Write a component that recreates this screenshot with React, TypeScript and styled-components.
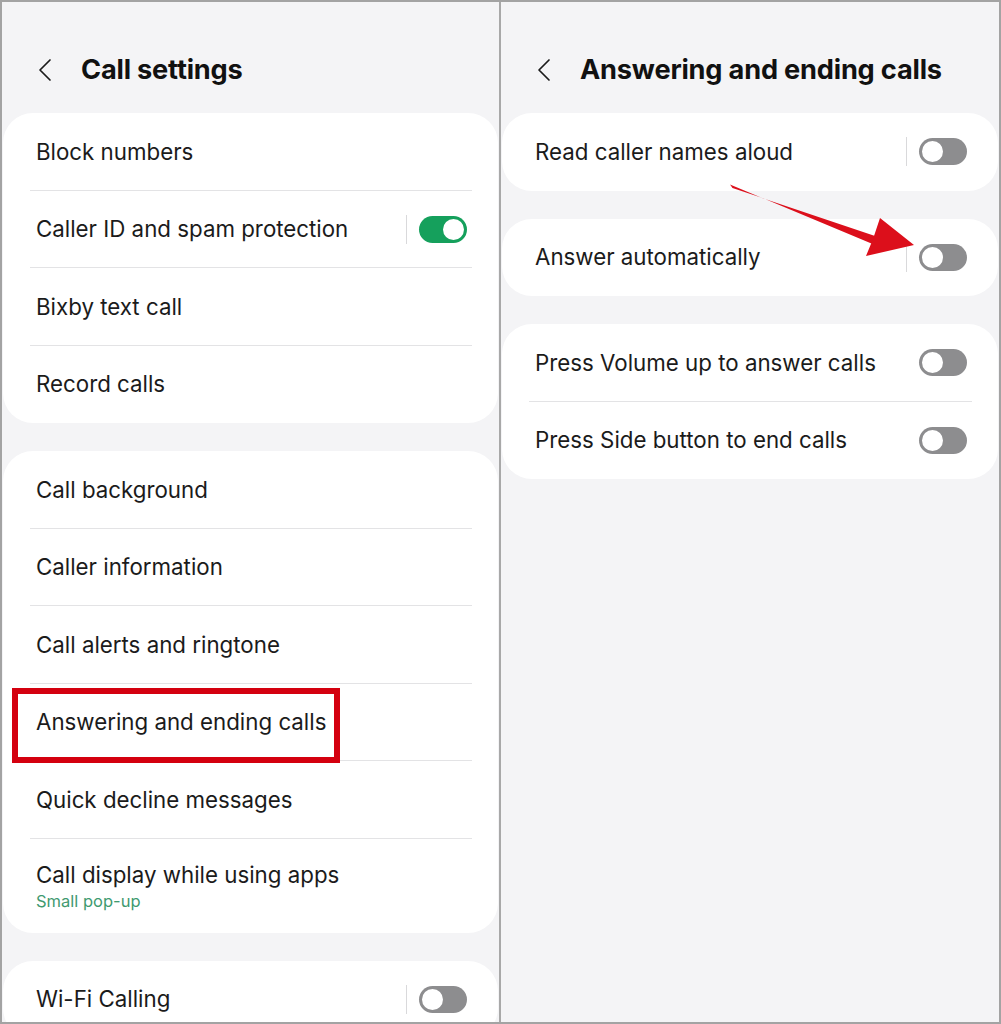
import styled, { createGlobalStyle } from "styled-components";

const GlobalStyle = createGlobalStyle`
  html, body {
    margin: 0;
    padding: 0;
    background: #ffffff;
  }
  body {
    font-family: Inter, "Noto Sans", Roboto, sans-serif;
    color: #1b1b1b;
  }
`;

interface Item {
  label: string;
  sub?: string;
  toggle?: "on" | "off";
  sep?: boolean;
}

const leftCards: Item[][] = [
  [
    { label: "Block numbers" },
    { label: "Caller ID and spam protection", toggle: "on", sep: true },
    { label: "Bixby text call" },
    { label: "Record calls" },
  ],
  [
    { label: "Call background" },
    { label: "Caller information" },
    { label: "Call alerts and ringtone" },
    { label: "Answering and ending calls" },
    { label: "Quick decline messages" },
    { label: "Call display while using apps", sub: "Small pop-up" },
  ],
  [{ label: "Wi-Fi Calling", toggle: "off", sep: true }],
];

const rightCards: Item[][] = [
  [{ label: "Read caller names aloud", toggle: "off", sep: true }],
  [{ label: "Answer automatically", toggle: "off", sep: true }],
  [
    { label: "Press Volume up to answer calls", toggle: "off" },
    { label: "Press Side button to end calls", toggle: "off" },
  ],
];

export default function App() {
  return (
    <>
      <GlobalStyle />
      <Frame>
        <Panel>
          <Header>
            <Back />
            <Title>Call settings</Title>
          </Header>
          <CardList>
            {leftCards.map((card, i) => (
              <SettingsCard key={i} items={card} />
            ))}
          </CardList>
        </Panel>
        <Divider />
        <Panel>
          <Header>
            <Back />
            <Title>Answering and ending calls</Title>
          </Header>
          <CardList>
            {rightCards.map((card, i) => (
              <SettingsCard key={i} items={card} />
            ))}
          </CardList>
        </Panel>

        {/* annotations drawn over the screenshot */}
        <Highlight />
        <Arrow viewBox="0 0 1001 1024">
          <polygon points="730,184.5 732.5,188 878,237 875,245" fill="#dc0f1b" />
          <polygon points="880,218 914,245 866,256 873,239" fill="#dc0f1b" />
        </Arrow>
      </Frame>
    </>
  );
}

function SettingsCard({ items }: { items: Item[] }) {
  return (
    <Card>
      {items.map((it, i) => (
        <Row key={i} $tall={!!it.sub} $last={i === items.length - 1}>
          <Texts>
            <Label>{it.label}</Label>
            {it.sub && <Sub>{it.sub}</Sub>}
          </Texts>
          {it.sep && <VSep />}
          {it.toggle && <Toggle $on={it.toggle === "on"} />}
        </Row>
      ))}
    </Card>
  );
}

function Back() {
  return (
    <BackIcon viewBox="0 0 16 24" width="16" height="24">
      <path d="M13 2 L3 12 L13 22" fill="none" stroke="#1b1b1b" strokeWidth="1.7" strokeLinecap="round" strokeLinejoin="round" />
    </BackIcon>
  );
}

const Frame = styled.div`
  position: relative;
  width: 1001px;
  height: 1024px;
  box-sizing: border-box;
  border: 2px solid #a3a3a3;
  background: #f4f4f6;
  display: grid;
  grid-template-columns: 497px 2px 1fr;
  overflow: hidden;
`;

const Panel = styled.div`
  display: flex;
  flex-direction: column;
  min-width: 0;
`;

const Divider = styled.div`
  background: #a8a8a8;
`;

const Header = styled.div`
  height: 111px;
  display: flex;
  align-items: center;
  padding: 24px 0 0 35px;
  gap: 28px;
  box-sizing: border-box;
`;

const BackIcon = styled.svg`
  flex: none;
`;

const Title = styled.h1`
  margin: 0;
  font-size: 27.2px;
  font-weight: 700;
  letter-spacing: -0.2px;
  color: #111;
`;

const CardList = styled.div`
  display: flex;
  flex-direction: column;
  gap: 28px;
  padding: 0 1px;
`;

const Card = styled.div`
  background: #ffffff;
  border-radius: 30px;
  overflow: hidden;
`;

const Row = styled.div<{ $tall: boolean; $last: boolean }>`
  position: relative;
  display: flex;
  align-items: center;
  height: ${(p) => (p.$tall ? "94px" : "77.5px")};
  padding: 0 31px 0 33px;
  box-sizing: border-box;

  &::after {
    content: "";
    display: ${(p) => (p.$last ? "none" : "block")};
    position: absolute;
    left: 27px;
    right: 26px;
    bottom: 0;
    height: 1px;
    background: #e3e3e5;
  }
`;

const Texts = styled.div`
  flex: 1;
  display: flex;
  flex-direction: column;
  gap: 4px;
`;

const Label = styled.span`
  font-size: 22.3px;
  line-height: 26px;
  color: #1b1b1b;
`;

const Sub = styled.span`
  font-size: 16.5px;
  line-height: 18px;
  color: #3f9a70;
`;

const VSep = styled.div`
  width: 1px;
  height: 29px;
  background: #d9d9db;
  margin-right: 12px;
`;

const Toggle = styled.div<{ $on: boolean }>`
  position: relative;
  width: 48px;
  height: 27px;
  border-radius: 14px;
  background: ${(p) => (p.$on ? "#15a05c" : "#8d8d8f")};
  flex: none;

  &::after {
    content: "";
    position: absolute;
    top: 1px;
    ${(p) => (p.$on ? "right: 1px;" : "left: 1px;")}
    width: 21px;
    height: 21px;
    border-radius: 50%;
    background: #ffffff;
    border: 2px solid ${(p) => (p.$on ? "#15a05c" : "#8d8d8f")};
  }
`;

const Highlight = styled.div`
  position: absolute;
  left: 10px;
  top: 686px;
  width: 328px;
  height: 75px;
  box-sizing: border-box;
  border: 6px solid #d4000f;
  pointer-events: none;
`;

const Arrow = styled.svg`
  position: absolute;
  left: -2px;
  top: -2px;
  width: 1001px;
  height: 1024px;
  pointer-events: none;
`;
